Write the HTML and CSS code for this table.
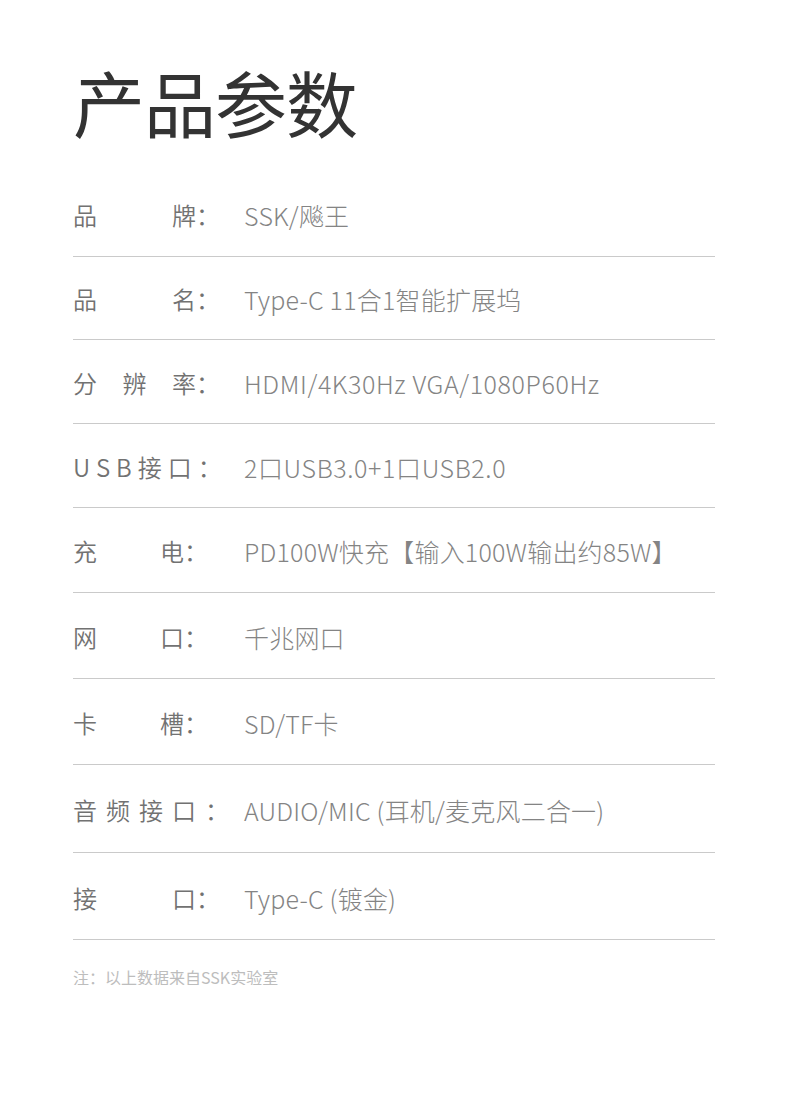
FILE: index.html
```html
<!DOCTYPE html>
<html lang="zh-CN">
<head>
<meta charset="utf-8">
<title>产品参数</title>
<link rel="stylesheet" href="styles.css">
</head>
<body>
<main class="page">
  <h1 class="title">产品参数</h1>
  <div class="specs">
    <div class="row h85">
      <div class="label w-long"><span>品</span><span>牌：</span></div>
      <div class="value">SSK/飚王</div>
    </div>
    <div class="row h83">
      <div class="label w-long"><span>品</span><span>名：</span></div>
      <div class="value">Type-C 11合1智能扩展坞</div>
    </div>
    <div class="row h84">
      <div class="label w-long"><span>分</span><span>辨</span><span>率：</span></div>
      <div class="value latin">HDMI/4K30Hz VGA/1080P60Hz</div>
    </div>
    <div class="row h84">
      <div class="label spaced-s">USB接口：</div>
      <div class="value latin">2口USB3.0+1口USB2.0</div>
    </div>
    <div class="row h85">
      <div class="label w-short"><span>充</span><span>电<i class="colon">：</i></span></div>
      <div class="value">PD100W快充【输入100W输出约85W】</div>
    </div>
    <div class="row h86">
      <div class="label w-short"><span>网</span><span>口<i class="colon">：</i></span></div>
      <div class="value">千兆网口</div>
    </div>
    <div class="row h86">
      <div class="label w-short"><span>卡</span><span>槽<i class="colon">：</i></span></div>
      <div class="value">SD/TF卡</div>
    </div>
    <div class="row h88">
      <div class="label spaced-l">音频接口<i class="colon">：</i></div>
      <div class="value">AUDIO/MIC (耳机/麦克风二合一)</div>
    </div>
    <div class="row h87">
      <div class="label w-long"><span>接</span><span>口<i class="colon">：</i></span></div>
      <div class="value">Type-C (镀金)</div>
    </div>
  </div>
  <p class="note">注：以上数据来自SSK实验室</p>
</main>
</body>
</html>
```

FILE: styles.css
```css
html, body {
  margin: 0;
  padding: 0;
  background: #ffffff;
}

.page {
  width: 642px;
  padding: 65px 0 0 73px;
  font-family: "Noto Sans CJK SC", "Noto Sans", sans-serif;
}

.title {
  margin: 0;
  font-size: 72px;
  line-height: 72px;
  font-weight: 400;
  color: #333333;
  letter-spacing: -1px;
}

.specs {
  margin-top: 35px;
}

.row {
  box-sizing: border-box;
  display: flex;
  align-items: center;
  border-bottom: 1px solid #cacaca;
  font-size: 24px;
  line-height: 24px;
  color: #727272;
  font-weight: 350;
  padding-top: 2px;
}

.row.h83 { height: 83px; }
.row.h84 { height: 84px; }
.row.h85 { height: 85px; }
.row.h86 { height: 86px; }
.row.h87 { height: 87px; padding-top: 3px; }
.row.h88 { height: 88px; padding-top: 3px; }

.label {
  display: flex;
  justify-content: space-between;
  flex: none;
  width: 171px;
}

.label.w-long {
  width: 147px;
  margin-right: 24px;
}

.label.w-short {
  width: 135px;
  margin-right: 36px;
}

.label.spaced-s {
  display: block;
  letter-spacing: 6px;
  width: 171px;
}

.label.spaced-l {
  display: block;
  letter-spacing: 9px;
  width: 171px;
  white-space: nowrap;
}

.colon {
  font-style: normal;
  font-family: "Noto Sans CJK JP", "Noto Sans CJK SC", sans-serif;
  letter-spacing: 0;
}

.value {
  white-space: nowrap;
  font-size: 25px;
  font-weight: 300;
  color: #848484;
  letter-spacing: 0.2px;
}

.value.latin {
  letter-spacing: 0.6px;
}

.note {
  margin: 29px 0 0;
  font-size: 16px;
  line-height: 16px;
  color: #bdbdbd;
}
```
